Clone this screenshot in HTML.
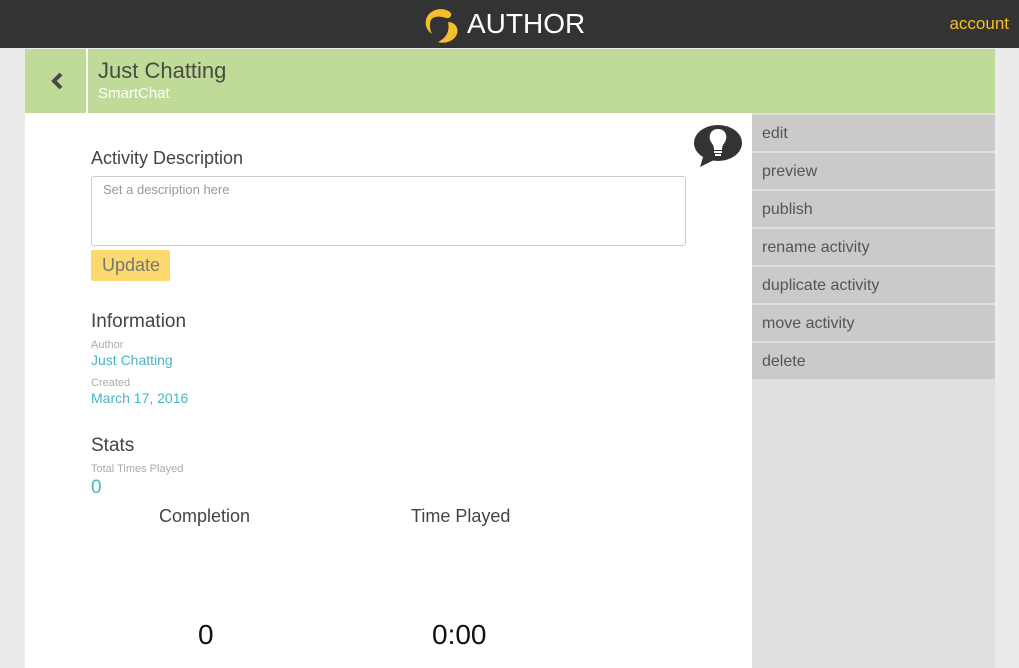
<!DOCTYPE html>
<html><head><meta charset="utf-8"><style>
*{margin:0;padding:0;box-sizing:border-box}
body{width:1019px;height:668px;overflow:hidden;background:#ebebeb;font-family:"Liberation Sans",sans-serif;position:relative}
.top{position:absolute;left:0;top:0;width:1019px;height:48px;background:#333}
.logo{position:absolute;left:422px;top:6px}
.atext{position:absolute;left:467px;top:8px;color:#fff;font-size:28px;letter-spacing:0px}
.acc{position:absolute;right:10px;top:14px;color:#f5be2e;font-size:17px}
.green{position:absolute;left:25px;top:49px;width:970px;height:64px;background:#c0da98}
.back{position:absolute;left:0;top:0;width:63px;height:64px;border-right:2px solid #fff}
.t1{position:absolute;left:73px;top:9px;font-size:22px;color:#4a4a44}
.t2{position:absolute;left:73px;top:36px;font-size:15px;color:#fff}
.main{position:absolute;left:25px;top:113px;width:727px;height:555px;background:#fff}
.side{position:absolute;left:752px;top:113px;width:243px;height:555px;background:#e0e0e0}
.btn{position:absolute;left:0;width:243px;height:36px;background:#cacaca;color:#555;font-size:16px;padding:10px 10px}
.h{position:absolute;font-size:19px;color:#444}
.sm{position:absolute;font-size:11px;color:#aaa}
.bl{position:absolute;font-size:14px;color:#48b4c8}
</style></head><body>
<div class="top">
<svg class="logo" width="40" height="38" viewBox="0 0 40 38"><path d="M4 14 C6 4 20 0 28 6 C31 9 28 13 24 12 C18 10 12 10 9 14 C7 18 8 24 10 28 C4 24 3 18 4 14Z" fill="#f5be2e"/><path d="M26 16 C34 16 38 24 34 30 C30 36 22 38 16 36 C24 32 28 26 26 16Z" fill="#f5be2e"/></svg>
<div class="atext">AUTHOR</div>
<div class="acc">account</div>
</div>
<div class="green">
<div class="back"><svg style="position:absolute;left:25px;top:22px" width="14" height="20" viewBox="0 0 14 20"><path d="M11 3 L4 10 L11 17" stroke="#4a4a44" stroke-width="4" fill="none"/></svg></div>
<div class="t1">Just Chatting</div>
<div class="t2">SmartChat</div>
</div>
<div class="main">
<svg style="position:absolute;left:667px;top:11px" width="52" height="46" viewBox="0 0 52 46"><ellipse cx="26" cy="19" rx="24" ry="18" fill="#333"/><path d="M12 30 L8 43 L24 35Z" fill="#333"/><path d="M26 5 C18 5 16 13 19 18 C21 21 22 22 22 26 L30 26 C30 22 31 21 33 18 C36 13 34 5 26 5Z" fill="#fff"/><rect x="22" y="27" width="8" height="2" fill="#fff"/><rect x="23" y="30" width="6" height="2" fill="#fff"/></svg>
<div class="h" style="left:66px;top:35px;font-size:18px">Activity Description</div>
<div style="position:absolute;left:66px;top:63px;width:595px;height:70px;border:1px solid #ccc;border-radius:3px;font-size:13px;color:#999;padding:5px 11px">Set a description here</div>
<div style="position:absolute;left:66px;top:137px;width:79px;height:31px;background:#fbd96e;border-radius:2px;color:#777;font-size:18px;padding:5px 0 0 11px">Update</div>
<div class="h" style="left:66px;top:198px">Information</div>
<div class="sm" style="left:66px;top:226px">Author</div>
<div class="bl" style="left:66px;top:239px">Just Chatting</div>
<div class="sm" style="left:66px;top:264px">Created</div>
<div class="bl" style="left:66px;top:277px">March 17, 2016</div>
<div class="h" style="left:66px;top:322px">Stats</div>
<div class="sm" style="left:66px;top:350px">Total Times Played</div>
<div class="bl" style="left:66px;top:364px;font-size:19px">0</div>
<div class="h" style="left:134px;top:393px;font-size:18px">Completion</div>
<div class="h" style="left:386px;top:393px;font-size:18px">Time Played</div>
<div style="position:absolute;left:173px;top:506px;font-size:28px;color:#111">0</div>
<div style="position:absolute;left:407px;top:506px;font-size:28px;color:#111">0:00</div>
</div>
<div class="side">
<div class="btn" style="top:2px">edit</div>
<div class="btn" style="top:40px">preview</div>
<div class="btn" style="top:78px">publish</div>
<div class="btn" style="top:116px">rename activity</div>
<div class="btn" style="top:154px">duplicate activity</div>
<div class="btn" style="top:192px">move activity</div>
<div class="btn" style="top:230px">delete</div>
</div>
</body></html>
